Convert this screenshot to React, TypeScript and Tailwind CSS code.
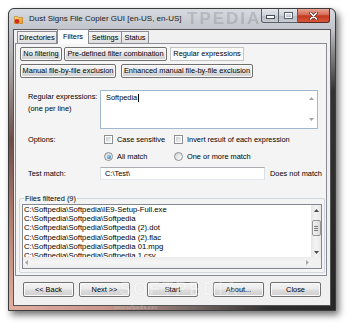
import React from 'react';

const FONT = "font-['Liberation_Sans',Arial,sans-serif]";

type Dir = 'up' | 'down' | 'left' | 'right';
function Tri({ dir, color = '#505050' }: { dir: Dir; color?: string }) {
  const v = dir === 'up' || dir === 'down';
  const w = v ? 5 : 3;
  const h = v ? 3 : 5;
  const pts = { up: '0,3 2.5,0 5,3', down: '0,0 2.5,3 5,0', left: '3,0 0,2.5 3,5', right: '0,0 3,2.5 0,5' }[dir];
  return (
    <svg width={w} height={h} viewBox={`0 0 ${w} ${h}`} className="block">
      <polygon points={pts} fill={color} />
    </svg>
  );
}

function Btn({ cls, children }: { cls: string; children: React.ReactNode }) {
  return (
    <div
      className={`${cls} flex shrink-0 items-center justify-center rounded-[2px] border border-[#707070] bg-[linear-gradient(to_bottom,#f3f3f3_0%,#ebebeb_48%,#dddddd_52%,#cfcfcf_100%)] shadow-[inset_0_0_0_1px_#fbfbfb] text-[7.4px] leading-none text-black whitespace-nowrap`}
    >
      {children}
    </div>
  );
}

function Check() {
  return (
    <div className="w-[9px] h-[9px] shrink-0 border border-[#8e8f8f] bg-white p-[1px]">
      <div className="w-full h-full bg-[linear-gradient(135deg,#c9cdd3,#f4f4f4)]" />
    </div>
  );
}

function Radio({ on }: { on?: boolean }) {
  return (
    <div className="w-[9px] h-[9px] shrink-0 rounded-full border border-[#8e8f8f] bg-[linear-gradient(135deg,#cfd3d8,#ffffff)] flex items-center justify-center">
      {on && <div className="w-[4px] h-[4px] rounded-full bg-[radial-gradient(circle_at_35%_35%,#9ad4f8,#1b5c9e)]" />}
    </div>
  );
}

const files = [
  'C:\\Softpedia\\Softpedia\\IE9-Setup-Full.exe',
  'C:\\Softpedia\\Softpedia\\Softpedia',
  'C:\\Softpedia\\Softpedia\\Softpedia (2).dot',
  'C:\\Softpedia\\Softpedia\\Softpedia (2).flac',
  'C:\\Softpedia\\Softpedia\\Softpedia 01.mpg',
  'C:\\Softpedia\\Softpedia\\Softpedia 1.csv',
];

export default function App() {
  return (
    <div className={`relative w-[350px] h-[323px] overflow-hidden bg-white ${FONT}`}>
      <div className="relative ml-[8px] mt-[8px] w-[328px] h-[303px] flex flex-col rounded-t-[6px] border border-[#3c3c3c] overflow-hidden shadow-[3px_4px_7px_rgba(0,0,0,0.55)] bg-[#2a2a2a]">
        {/* Title bar */}
        <div className="relative h-[20px] flex items-center bg-[linear-gradient(to_bottom,#d7dadf_0%,#c9cdd3_60%,#c2c6cc_100%)]">
          <div className="pointer-events-none absolute left-[178px] top-[1px] text-[17px] font-bold tracking-[2px] leading-none text-[#6a6a6a] opacity-25 blur-[0.7px]">
            TPEDIA
          </div>
          <svg width="9" height="9" viewBox="0 0 9 9" className="relative ml-[5px] shrink-0">
            <defs>
              <linearGradient id="ic" x1="0" y1="0" x2="1" y2="1">
                <stop offset="0" stopColor="#ffe27a" />
                <stop offset="1" stopColor="#e59a1c" />
              </linearGradient>
            </defs>
            <path d="M0.5 1.5 H3.5 L4.5 2.5 H8.5 V8.5 H0.5 Z" fill="url(#ic)" stroke="#b77510" strokeWidth="0.6" />
            <circle cx="3" cy="6.3" r="2.3" fill="#d9261c" />
          </svg>
          <div className="relative ml-[6px] text-[8px] leading-none text-[#1a1a1a] whitespace-nowrap">
            Dust Signs File Copier GUI [en-US, en-US]
          </div>
          <div className="flex-1" />
          <div className="relative self-start mr-[5px] flex h-[14px]">
            <div className="w-[18px] h-full rounded-bl-[3px] border border-t-0 border-[#5a606a] bg-[linear-gradient(to_bottom,#e4e7eb_0%,#cdd2d8_50%,#b7bdc5_51%,#c7ccd3_100%)] flex items-center justify-center">
              <div className="w-[7px] h-[2px] mt-[3px] bg-white border border-[#4a4f57] box-content" />
            </div>
            <div className="w-[19px] h-full border-y border-r border-t-0 border-[#5a606a] bg-[linear-gradient(to_bottom,#e4e7eb_0%,#cdd2d8_50%,#b7bdc5_51%,#c7ccd3_100%)] flex items-center justify-center">
              <div className="w-[7px] h-[5px] border-[1.5px] border-white outline outline-1 outline-[#5a606a]" />
            </div>
            <div className="w-[32px] h-full rounded-br-[3px] border border-t-0 border-l-0 border-[#5a2a22] bg-[linear-gradient(to_bottom,#e8a494_0%,#d66a55_45%,#c1391f_52%,#d8553a_100%)] flex items-center justify-center">
              <svg width="9" height="8" viewBox="0 0 9 8">
                <path d="M1.5 1 L7.5 7 M7.5 1 L1.5 7" stroke="#5a2a22" strokeWidth="3" strokeLinecap="round" />
                <path d="M1.5 1 L7.5 7 M7.5 1 L1.5 7" stroke="#ffffff" strokeWidth="1.6" strokeLinecap="round" />
              </svg>
            </div>
          </div>
        </div>

        {/* Middle */}
        <div className="flex h-[277px]">
          <div className="w-[4px] bg-[linear-gradient(to_bottom,#c3c6cb_0%,#a7a3a4_14%,#6e4e49_40%,#a8766a_65%,#dfae9f_100%)]" />
          <div className="border border-[#555555] bg-[#f0f0f0]">
            <div className="w-[316px] h-[275px] flex flex-col text-black">
              {/* Tabs */}
              <div className="h-[13px] flex items-end pl-[3px] text-[7.4px] leading-none">
                <div className="w-[40px] h-[12px] flex items-center justify-center border border-b-0 border-[#898c95] bg-[linear-gradient(to_bottom,#f4f4f4,#dedede)]">Directories</div>
                <div className="relative z-10 translate-y-[1px] w-[32px] h-[15px] flex items-start pt-[3px] justify-center border border-b-0 border-[#898c95] bg-[#fbfbfb]">Filters</div>
                <div className="w-[33px] h-[12px] flex items-center justify-center border border-b-0 border-l-0 border-[#898c95] bg-[linear-gradient(to_bottom,#f4f4f4,#dedede)]">Settings</div>
                <div className="w-[27px] h-[12px] flex items-center justify-center border border-b-0 border-l-0 border-[#898c95] bg-[linear-gradient(to_bottom,#f4f4f4,#dedede)]">Status</div>
              </div>

              {/* Panel */}
              <div className="ml-[1px] w-[312px] h-[233px] border border-[#898c95] bg-[#f4f4f4] flex flex-col text-[7.4px] leading-none">
                <div className="mt-[3px] ml-[4px] flex h-[14px]">
                  <Btn cls="w-[42px] h-[14px]">No filtering</Btn>
                  <Btn cls="ml-[2px] w-[103px] h-[14px]">Pre-defined filter combination</Btn>
                  <div className="ml-[3px] w-[74px] h-[14px] flex items-center justify-center border border-[#c4c4c4] bg-[#fbfbfb] whitespace-nowrap">Regular expressions</div>
                </div>
                <div className="mt-[3px] ml-[4px] flex h-[14px]">
                  <Btn cls="w-[96px] h-[14px]">Manual file-by-file exclusion</Btn>
                  <Btn cls="ml-[5px] w-[132px] h-[14px]">Enhanced manual file-by-file exclusion</Btn>
                </div>

                {/* Regex */}
                <div className="mt-[12px] ml-[12px] flex h-[39px]">
                  <div className="w-[72px] pt-[1px] leading-[12px]">
                    Regular expressions:
                    <br />
                    (one per line)
                  </div>
                  <div className="w-[218px] h-[39px] border border-[#9fb9d1] bg-white flex">
                    <div className="flex-1 pl-[5px] pt-[3px] flex items-start">
                      <span>Softpedia</span>
                      <span className="ml-[0.5px] w-[1px] h-[8px] -mt-[0.5px] bg-black" />
                    </div>
                    <div className="w-[9px] mr-[1px] flex flex-col items-center justify-between pt-[6px] pb-[7px]">
                      <Tri dir="up" color="#a3a3a3" />
                      <Tri dir="down" color="#a3a3a3" />
                    </div>
                  </div>
                </div>

                {/* Options */}
                <div className="mt-[6px] ml-[12px] flex items-center h-[9px]">
                  <div className="w-[72px]">Options:</div>
                  <div className="ml-[4px] w-[70px] flex items-center">
                    <Check />
                    <span className="ml-[4px]">Case sensitive</span>
                  </div>
                  <div className="flex items-center">
                    <Check />
                    <span className="ml-[4px]">Invert result of each expression</span>
                  </div>
                </div>
                <div className="mt-[8px] ml-[12px] flex items-center h-[9px]">
                  <div className="w-[72px]" />
                  <div className="ml-[4px] w-[70px] flex items-center">
                    <Radio on />
                    <span className="ml-[4px]">All match</span>
                  </div>
                  <div className="flex items-center">
                    <Radio />
                    <span className="ml-[4px]">One or more match</span>
                  </div>
                </div>

                {/* Test match */}
                <div className="mt-[6px] ml-[12px] flex items-center h-[13px]">
                  <div className="w-[72px]">Test match:</div>
                  <div className="w-[165px] h-[13px] border border-[#abadb3] border-b-[#e3e9ef] border-x-[#dbdfe6] bg-white flex items-center pl-[4px]">
                    C:\Test\
                  </div>
                  <div className="ml-[5px] whitespace-nowrap">Does not match</div>
                </div>

                {/* Files filtered group */}
                <div className="relative mt-[18px] ml-[3px] w-[306px] h-[75px] rounded-[2px] border border-[#d0d7dc] pt-[5px] pl-[2px]">
                  <div className="absolute left-[4px] -top-[4px] bg-[#f4f4f4] px-[1px]">Files filtered (9)</div>
                  <div className="w-[300px] h-[65px] border border-[#828790] bg-white flex flex-col">
                    <div className="flex h-[52px]">
                      <div className="flex-1 overflow-hidden pl-[1px] text-[7.7px] leading-[9.2px] whitespace-nowrap">
                        {files.map((f) => (
                          <div key={f}>{f}</div>
                        ))}
                      </div>
                      <div className="w-[10px] bg-[linear-gradient(to_right,#e6e6e6,#f4f4f4,#e6e6e6)] flex flex-col items-center">
                        <div className="h-[10px] flex items-center justify-center">
                          <Tri dir="up" color="#4a4a4a" />
                        </div>
                        <div className="mt-[5px] w-[9px] h-[16px] rounded-[2px] border border-[#979797] bg-[linear-gradient(to_right,#f2f2f2,#dadada)] flex flex-col items-center justify-center gap-[1px]">
                          <div className="w-[4px] h-[1px] bg-[#7a7a7a]" />
                          <div className="w-[4px] h-[1px] bg-[#7a7a7a]" />
                          <div className="w-[4px] h-[1px] bg-[#7a7a7a]" />
                        </div>
                        <div className="flex-1" />
                        <div className="h-[10px] flex items-center justify-center">
                          <Tri dir="down" color="#4a4a4a" />
                        </div>
                      </div>
                    </div>
                    <div className="flex h-[11px]">
                      <div className="flex-1 bg-[linear-gradient(to_bottom,#ececec,#f5f5f5,#ececec)] flex items-center justify-between px-[2px]">
                        <Tri dir="left" color="#a6a6a6" />
                        <Tri dir="right" color="#a6a6a6" />
                      </div>
                      <div className="w-[10px] bg-[#f0f0f0]" />
                    </div>
                  </div>
                </div>
              </div>

              {/* Bottom buttons */}
              <div className="mt-[6px] flex h-[15px]">
                <Btn cls="ml-[9px] w-[51px] h-[15px]">&lt;&lt; Back</Btn>
                <Btn cls="ml-[5px] w-[51px] h-[15px]">Next &gt;&gt;</Btn>
                <Btn cls="ml-[17px] w-[51px] h-[15px]">Start</Btn>
                <Btn cls="ml-[15px] w-[51px] h-[15px]">About...</Btn>
                <Btn cls="ml-[6px] w-[51px] h-[15px]">Close</Btn>
              </div>
            </div>
          </div>
          <div className="w-[4px] bg-[linear-gradient(to_bottom,#c3c6cb_0%,#8b8b8b_8%,#333333_22%,#262626_100%)]" />
        </div>

        {/* Bottom frame */}
        <div className="h-[4px] bg-[linear-gradient(to_right,#dfae9f_0%,#c8978a_30%,#7a6a66_55%,#303030_80%,#262626_100%)]" />

        {/* Watermarks */}
        <div className="pointer-events-none absolute left-[110px] top-[271px] text-[18px] font-bold tracking-[2px] leading-none text-white opacity-30 [text-shadow:0_0_1px_#8a8a8a]">
          SOFTPEDIA
        </div>
        <div className="pointer-events-none absolute left-[105px] top-[296px] text-[5px] leading-none text-[#bdbdbd] opacity-70">
          www.softpedia.com
        </div>
      </div>
    </div>
  );
}
